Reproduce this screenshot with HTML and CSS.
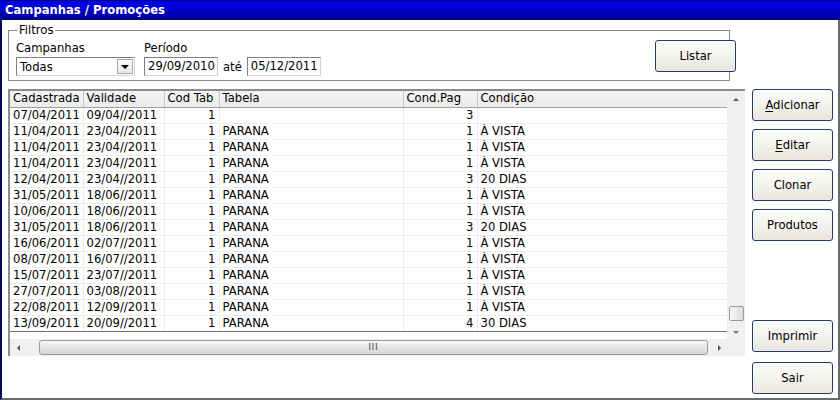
FILE: index.html
```html
<!DOCTYPE html>
<html>
<head>
<meta charset="utf-8">
<link rel="stylesheet" href="styles.css">
</head>
<body>
<div class="window">
  <div class="titlebar">Campanhas / Promoções</div>
  <div class="body">
    <div class="main">
      <fieldset class="filters">
        <legend>Filtros</legend>
        <div class="field field-camp">
          <label>Campanhas</label>
          <div class="select"><span>Todas</span><span class="sel-btn"><span class="tri-down"></span></span></div>
        </div>
        <div class="field">
          <label>Período</label>
          <div class="dates"><span class="input">29/09/2010</span><span class="ate">até</span><span class="input">05/12/2011</span></div>
        </div>
        <button class="btn btn-listar">Listar</button>
      </fieldset>
      <div class="grid">
        <div class="grid-top">
          <div class="table-wrap">
            <table>
              <colgroup><col class="c1"><col class="c2"><col class="c3"><col class="c4"><col class="c5"><col class="c6"></colgroup>
              <thead><tr><th>Cadastrada</th><th>Validade</th><th>Cod Tab</th><th>Tabela</th><th>Cond.Pag</th><th>Condição</th></tr></thead>
              <tbody>
                <tr><td>07/04/2011</td><td>09/04//2011</td><td class="r">1</td><td></td><td class="r">3</td><td></td></tr>
                <tr><td>11/04/2011</td><td>23/04//2011</td><td class="r">1</td><td>PARANA</td><td class="r">1</td><td>À VISTA</td></tr>
                <tr><td>11/04/2011</td><td>23/04//2011</td><td class="r">1</td><td>PARANA</td><td class="r">1</td><td>À VISTA</td></tr>
                <tr><td>11/04/2011</td><td>23/04//2011</td><td class="r">1</td><td>PARANA</td><td class="r">1</td><td>À VISTA</td></tr>
                <tr><td>12/04/2011</td><td>23/04//2011</td><td class="r">1</td><td>PARANA</td><td class="r">3</td><td>20 DIAS</td></tr>
                <tr><td>31/05/2011</td><td>18/06//2011</td><td class="r">1</td><td>PARANA</td><td class="r">1</td><td>À VISTA</td></tr>
                <tr><td>10/06/2011</td><td>18/06//2011</td><td class="r">1</td><td>PARANA</td><td class="r">1</td><td>À VISTA</td></tr>
                <tr><td>31/05/2011</td><td>18/06//2011</td><td class="r">1</td><td>PARANA</td><td class="r">3</td><td>20 DIAS</td></tr>
                <tr><td>16/06/2011</td><td>02/07//2011</td><td class="r">1</td><td>PARANA</td><td class="r">1</td><td>À VISTA</td></tr>
                <tr><td>08/07/2011</td><td>16/07//2011</td><td class="r">1</td><td>PARANA</td><td class="r">1</td><td>À VISTA</td></tr>
                <tr><td>15/07/2011</td><td>23/07//2011</td><td class="r">1</td><td>PARANA</td><td class="r">1</td><td>À VISTA</td></tr>
                <tr><td>27/07/2011</td><td>03/08//2011</td><td class="r">1</td><td>PARANA</td><td class="r">1</td><td>À VISTA</td></tr>
                <tr><td>22/08/2011</td><td>12/09//2011</td><td class="r">1</td><td>PARANA</td><td class="r">1</td><td>À VISTA</td></tr>
                <tr class="last"><td>13/09/2011</td><td>20/09//2011</td><td class="r">1</td><td>PARANA</td><td class="r">4</td><td>30 DIAS</td></tr>
              </tbody>
            </table>
          </div>
          <div class="vscroll">
            <span class="tri-up small"></span>
            <span class="vspacer"></span>
            <span class="vthumb"></span>
            <span class="tri-down small"></span>
          </div>
        </div>
        <div class="hscroll">
          <span class="tri-left"></span>
          <span class="hthumb"><span class="grip">III</span></span>
          <span class="tri-right"></span>
          <span class="corner"></span>
        </div>
      </div>
    </div>
    <div class="side">
      <div class="side-top">
        <button class="btn"><u>A</u>dicionar</button>
        <button class="btn"><u>E</u>ditar</button>
        <button class="btn">Clonar</button>
        <button class="btn">Produtos</button>
      </div>
      <div class="side-bottom">
        <button class="btn">Imprimir</button>
        <button class="btn">Sair</button>
      </div>
    </div>
  </div>
</div>
</body>
</html>
```

FILE: styles.css
```css
* { box-sizing: border-box; }
html, body { margin: 0; padding: 0; }
body {
  width: 840px;
  height: 400px;
  background: #ffffff;
  font-family: "DejaVu Sans", Verdana, sans-serif;
  font-size: 11.6px;
  color: #000;
  overflow: hidden;
}
.window {
  width: 840px;
  height: 400px;
  display: flex;
  flex-direction: column;
  border-right: 2px solid #6b6b6b;
  border-bottom: 2px solid #6b6b6b;
  border-left: 2px solid #0a0a5a;
}
.titlebar {
  height: 20px;
  margin-left: -2px;
  margin-right: -2px;
  padding-left: 5px;
  line-height: 20px;
  font-weight: bold;
  font-size: 11.6px;
  color: #fff;
  background: linear-gradient(to bottom, #00006a 0, #0000f0 2px, #0000d0 9px, #000096 19px, #000070 20px);
}
.body {
  flex: 1;
  display: flex;
  padding-left: 6px;
}
.main {
  width: 736px;
  display: flex;
  flex-direction: column;
}
.filters {
  margin: 4px 0 0 0;
  width: 722px;
  height: 57px;
  border: 1px solid #8a8a8a;
  padding: 0 0 0 7px;
  display: flex;
  align-items: flex-start;
}
.filters legend {
  padding: 0 2px;
  margin-left: 1px;
  line-height: 12px;
  color: #000;
}
.field { display: flex; flex-direction: column; margin-top: 5px; }
.field label { line-height: 14px; height: 15px; }
.field-camp { width: 128px; }
.select {
  margin-top: 1px;
  width: 119px;
  height: 19px;
  border: 1px solid #7f7f7f;
  border-right-color: #d4d4d4;
  border-bottom-color: #d4d4d4;
  display: flex;
  align-items: center;
  justify-content: space-between;
  padding-left: 3px;
}
.sel-btn {
  width: 16px;
  height: 15px;
  margin-right: 1px;
  background: linear-gradient(#ffffff, #e6e6e6);
  border: 1px solid #a8a8a8;
  display: flex;
  align-items: center;
  justify-content: center;
}
.tri-down {
  width: 0; height: 0;
  border-left: 4px solid transparent;
  border-right: 4px solid transparent;
  border-top: 4px solid #000;
}
.dates { display: flex; align-items: center; margin-top: 1px; }
.input {
  width: 74px;
  height: 19px;
  border: 1px solid #7f7f7f;
  border-right-color: #d4d4d4;
  border-bottom-color: #d4d4d4;
  padding-left: 3px;
  line-height: 17px;
  white-space: nowrap;
  overflow: hidden;
}
.ate { padding: 0 5px 0 5px; }
.btn {
  width: 81px;
  height: 32px;
  border: 1px solid #1e3f6e;
  border-radius: 3px;
  background: linear-gradient(#fdfdfc, #f4f3ee 50%, #e8e6dd);
  font-family: "DejaVu Sans", Verdana, sans-serif;
  font-size: 11.6px;
  color: #000;
  padding: 0;
}
.btn-listar { margin-left: auto; margin-right: -7px; margin-top: 4px; }
.grid {
  margin-top: 8px;
  width: 737px;
  height: 267px;
  border-top: 2px solid #8c8c8c;
  border-left: 2px solid #8c8c8c;
  display: flex;
  flex-direction: column;
  background: #fff;
}
.grid-top { display: flex; height: 248px; }
.table-wrap { width: 717px; height: 248px; overflow: hidden; }
table {
  border-collapse: collapse;
  table-layout: fixed;
  width: 717px;
}
col.c1 { width: 73px; }
col.c2 { width: 81px; }
col.c3 { width: 55px; }
col.c4 { width: 184px; }
col.c5 { width: 74px; }
col.c6 { width: 250px; }
th {
  height: 16px;
  font-weight: normal;
  text-align: left;
  padding: 0 3px;
  background: linear-gradient(#f4f4f4, #ececec);
  border-right: 1px solid #c8c8c8;
  border-bottom: 1px solid #a0a0a0;
  white-space: nowrap;
  line-height: 15px;
  overflow: hidden;
}
th:last-child { border-right: none; }
td {
  height: 16px;
  padding: 0 3px;
  border-right: 1px solid #ececec;
  border-bottom: 1px solid #ececec;
  white-space: nowrap;
  line-height: 15px;
  overflow: hidden;
}
td:last-child { border-right: none; }
tr.last td { border-bottom: 1px solid #6e6e6e; }
.r { text-align: right; }
.vscroll {
  width: 18px;
  height: 248px;
  background: #f0f0f0;
  display: flex;
  flex-direction: column;
  align-items: center;
  padding: 7px 0 5px 0;
}
.vspacer { flex: 1; }
.tri-up.small {
  width: 0; height: 0;
  border-left: 3px solid transparent;
  border-right: 3px solid transparent;
  border-bottom: 3px solid #555;
}
.tri-down.small {
  width: 0; height: 0;
  border-left: 3px solid transparent;
  border-right: 3px solid transparent;
  border-top: 3px solid #777;
  margin-top: 10px;
}
.vthumb {
  width: 15px;
  height: 15px;
  border: 1px solid #9a9a9a;
  border-radius: 2px;
  background: linear-gradient(to right, #f6f6f6, #dcdcdc);
}
.hscroll {
  height: 17px;
  display: flex;
  align-items: center;
  background: #f0f0f0;
}
.tri-left {
  width: 0; height: 0;
  margin-left: 7px;
  border-top: 3px solid transparent;
  border-bottom: 3px solid transparent;
  border-right: 3px solid #555;
}
.hthumb {
  margin-left: 19px;
  width: 669px;
  height: 15px;
  border: 1px solid #9a9a9a;
  border-radius: 3px;
  background: linear-gradient(#f8f8f8, #e2e2e2 60%, #d6d6d6);
  display: flex;
  align-items: center;
  justify-content: center;
}
.grip { font-size: 8px; color: #555; letter-spacing: 0.5px; line-height: 8px; transform: scaleX(1.2); }
.tri-right {
  width: 0; height: 0;
  margin-left: 10px;
  border-top: 3px solid transparent;
  border-bottom: 3px solid transparent;
  border-left: 3px solid #555;
}
.corner { flex: 1; }
.side {
  margin-left: 8px;
  display: flex;
  flex-direction: column;
  justify-content: space-between;
  padding-top: 69px;
  padding-bottom: 4px;
}
.side-top { display: flex; flex-direction: column; gap: 8px; }
.side-bottom { display: flex; flex-direction: column; gap: 10px; }
u { text-decoration: underline; text-underline-offset: 2px; }
```
